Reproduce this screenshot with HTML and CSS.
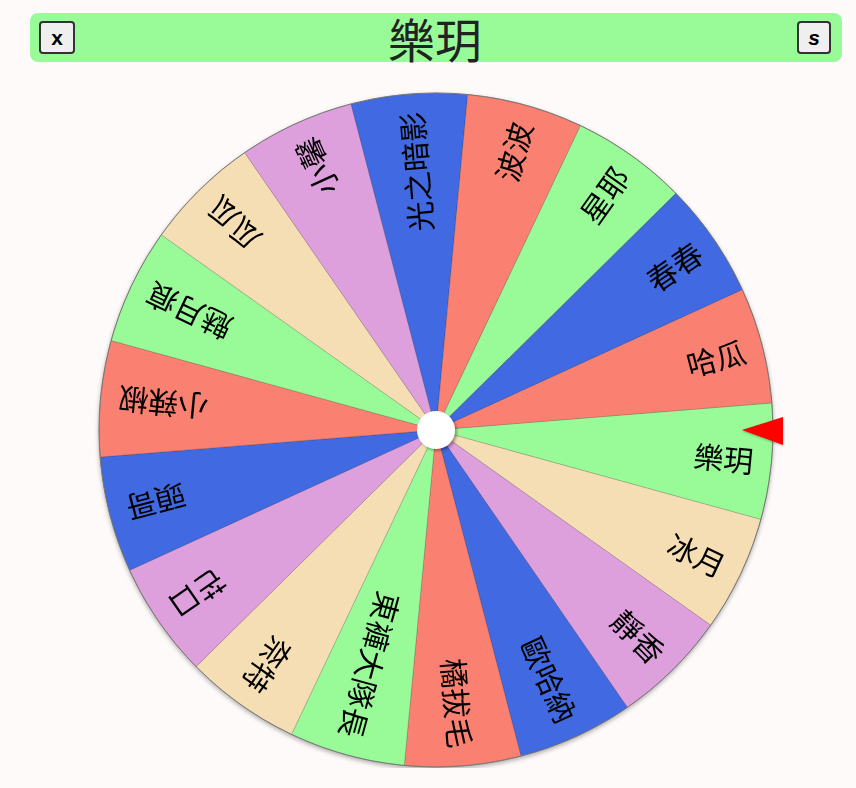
FILE: index.html
```html
<!DOCTYPE html>
<html lang="zh-Hant">
<head>
  <meta charset="UTF-8" />
  <meta name="viewport" content="width=device-width, initial-scale=1.0" />
  <title>樂玥</title>
  <link rel="stylesheet" href="styles.css">
</head>
<body>

  <div class="top-bar">
    <button class="bar-btn" id="closeBtn">x</button>
    <h1 class="winner">樂玥</h1>
    <button class="bar-btn bar-btn-right" id="spinBtn">s</button>
  </div>

  <div class="wheel-wrap">
    <div class="wheel-box">
      <svg id="wheel" class="wheel" viewBox="-338 -338 676 676" width="676" height="676">
        <defs>
          <filter id="hubShadow" x="-50%" y="-50%" width="200%" height="200%">
            <feDropShadow dx="2" dy="2" stdDeviation="1.5" flood-color="#000" flood-opacity="0.35" />
          </filter>
        </defs>
        <g id="slices"></g>
        <circle cx="0" cy="0" r="337" fill="none" stroke="#777" stroke-width="1" />
        <circle cx="0" cy="0" r="19" fill="#fff" filter="url(#hubShadow)" />
      </svg>
      <svg class="pointer" viewBox="0 0 42 30" width="42" height="30">
        <polygon points="0,13 41,0 41,28" fill="#ff0000" />
      </svg>
    </div>
  </div>

  <script>
    // Names on the wheel, clockwise from the pointer.
    const names = [
      ['樂玥', 'palegreen'], ['冰月', 'wheat'], ['靜香', 'plum'], ['歐哈納', 'royalblue'],
      ['橘拔毛', 'salmon'], ['東褲大隊長', 'palegreen'], ['奈特', 'wheat'], ['芒口', 'plum'],
      ['頭哥', 'royalblue'], ['小辣椒', 'salmon'], ['魅月痕', 'palegreen'], ['瓜瓜', 'wheat'],
      ['小馨', 'plum'], ['光之暗影', 'royalblue'], ['波波', 'salmon'], ['星耶', 'palegreen'],
      ['春春', 'royalblue'], ['哈瓜', 'salmon']
    ];
    const NS = 'http://www.w3.org/2000/svg';
    const R = 337;
    const offset = -4.6; // current rotation of the wheel, in degrees
    const step = 360 / names.length;
    const slices = document.getElementById('slices');

    function point(deg) {
      const rad = deg * Math.PI / 180;
      return (R * Math.cos(rad)).toFixed(2) + ' ' + (R * Math.sin(rad)).toFixed(2);
    }

    names.forEach(function(item, i) {
      const a0 = offset + i * step;
      const a1 = a0 + step;
      const path = document.createElementNS(NS, 'path');
      path.setAttribute('d', 'M0 0 L' + point(a0) + ' A' + R + ' ' + R + ' 0 0 1 ' + point(a1) + ' Z');
      path.setAttribute('fill', item[1]);
      path.setAttribute('class', 'slice');
      slices.appendChild(path);

      const label = document.createElementNS(NS, 'text');
      label.setAttribute('x', 319);
      label.setAttribute('y', 0);
      label.setAttribute('class', 'slice-label');
      label.setAttribute('transform', 'rotate(' + (a0 + step / 2) + ')');
      label.textContent = item[0];
      slices.appendChild(label);
    });
  </script>

</body>
</html>
```

FILE: styles.css
```css
body {
  margin: 0;
  background-color: #fffafa;
  font-family: "Liberation Sans", Arial, sans-serif;
}
.top-bar {
  display: grid;
  grid-template-columns: 1fr auto 1fr;
  align-items: center;
  width: 812px;
  height: 49px;
  margin: 13px 0 0 30px;
  padding: 0 11px 0 9px;
  box-sizing: border-box;
  background-color: palegreen;
  border-radius: 8px;
}
.bar-btn {
  justify-self: start;
  width: 36px;
  height: 33px;
  padding: 0;
  background-color: #efefef;
  border: 2px solid #333;
  border-radius: 4px;
  font-family: "Liberation Sans", Arial, sans-serif;
  font-size: 21px;
  font-weight: bold;
  line-height: 1;
  color: #000;
  cursor: pointer;
}
.bar-btn-right {
  justify-self: end;
  width: 34px;
  font-style: italic;
}
.winner {
  margin: 0;
  font-family: "Noto Sans CJK TC", "Noto Sans", sans-serif;
  font-size: 47px;
  font-weight: normal;
  line-height: 49px;
  color: #222;
}
/* Wheel sits centred under the bar */
.wheel-wrap {
  display: flex;
  justify-content: center;
  width: 812px;
  margin: 30px 0 0 30px;
}
.wheel-box {
  position: relative;
  width: 676px;
  height: 676px;
}
.wheel {
  display: block;
  filter: drop-shadow(0 2px 2px rgba(0, 0, 0, 0.3));
}
.slice {
  stroke: rgba(0, 0, 0, 0.25);
  stroke-width: 0.6;
}
.slice-label {
  font-family: "Noto Sans CJK TC", "Noto Sans", sans-serif;
  font-size: 30px;
  fill: #000;
  text-anchor: end;
  dominant-baseline: central;
}
/* Red marker on the right rim */
.pointer {
  position: absolute;
  left: 644px;
  top: 325px;
  filter: drop-shadow(0 1px 1px rgba(0, 0, 0, 0.3));
}
```
